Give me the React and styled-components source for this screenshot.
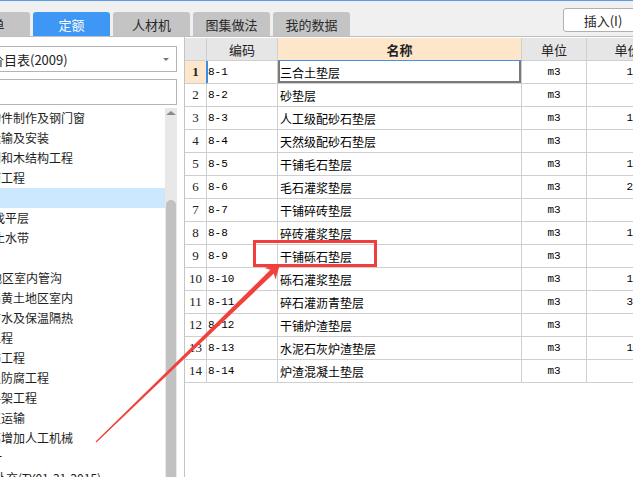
import React from "react";
import styled, { createGlobalStyle } from "styled-components";

const GlobalStyle = createGlobalStyle`
  html, body {
    margin: 0;
    padding: 0;
    background: #fff;
    overflow: hidden;
  }
  body {
    font-family: "Noto Sans CJK SC", "Noto Sans", sans-serif;
  }
`;

const tabs = [
  { label: "清单" },
  { label: "定额", active: true },
  { label: "人材机" },
  { label: "图集做法" },
  { label: "我的数据" },
];

// text includes the char cut at the left edge, shift = where the text starts
const chapters = [
  { text: "构件制作及钢门窗", shift: -11 },
  { text: "运输及安装", shift: -11 },
  { text: "门和木结构工程", shift: -11 },
  { text: "面工程", shift: -11 },
  { text: "垫层", shift: -40, selected: true },
  { text: "找平层", shift: -7 },
  { text: "止水带", shift: -7 },
  { text: "其他", shift: -40 },
  { text: "地区室内管沟", shift: -10 },
  { text: "陷黄土地区室内", shift: -11 },
  { text: "防水及保温隔热", shift: -11 },
  { text: "工程", shift: -11 },
  { text: "饰工程", shift: -11 },
  { text: "及防腐工程", shift: -11 },
  { text: "手架工程", shift: -11 },
  { text: "直运输", shift: -11 },
  { text: "高增加人工机械", shift: -11 },
  { text: "计", shift: -10 },
  { text: "补充(TY01-31-2015)", shift: -6 },
];

const rows = [
  ["8-1", "三合土垫层", "136.59"],
  ["8-2", "砂垫层", "81.30"],
  ["8-3", "人工级配砂石垫层", "152.47"],
  ["8-4", "天然级配砂石垫层", "94.88"],
  ["8-5", "干铺毛石垫层", "118.62"],
  ["8-6", "毛石灌浆垫层", "209.45"],
  ["8-7", "干铺碎砖垫层", "96.13"],
  ["8-8", "碎砖灌浆垫层", "143.70"],
  ["8-9", "干铺砾石垫层", "88.26"],
  ["8-10", "砾石灌浆垫层", "157.34"],
  ["8-11", "碎石灌沥青垫层", "312.05"],
  ["8-12", "干铺炉渣垫层", "75.91"],
  ["8-13", "水泥石灰炉渣垫层", "164.28"],
  ["8-14", "炉渣混凝土垫层", "92.60"],
];

const App = () => {
  return (
    <>
      <GlobalStyle />
      <Frame>
        <TopLine />
        <TabBar>
          <TabStrip>
            {tabs.map((t) => (
              <Tab key={t.label} $active={t.active}>
                {t.label}
              </Tab>
            ))}
          </TabStrip>
          <InsertButton>插入(I)</InsertButton>
        </TabBar>
        <Body>
          <LeftPanel>
            <Select>
              <span>建筑价目表(2009)</span>
              <SelectArrow />
            </Select>
            <SearchBox />
            <ListWrap>
              <List>
                {chapters.map((c) => (
                  <ListItem key={c.text} $shift={c.shift} $selected={c.selected}>
                    {c.text}
                  </ListItem>
                ))}
              </List>
              <ScrollTrack>
                <ScrollUp />
                <ScrollThumb />
              </ScrollTrack>
            </ListWrap>
          </LeftPanel>
          <TableArea>
            <GridRow $head>
              <HeadCell />
              <HeadCell>编码</HeadCell>
              <HeadCell $accent>名称</HeadCell>
              <HeadCell>单位</HeadCell>
              <HeadCell>单价</HeadCell>
            </GridRow>
            {rows.map(([code, name, price], i) => (
              <GridRow key={code}>
                <NumCell $current={i === 0}>{i + 1}</NumCell>
                <Cell $mono $marker={i === 0}>
                  {code}
                </Cell>
                <Cell $selected={i === 0}>{name}</Cell>
                <Cell $mono $align="center">
                  m3
                </Cell>
                <Cell $mono $align="right">
                  {price}
                </Cell>
              </GridRow>
            ))}
          </TableArea>
        </Body>
        <Overlay width="633" height="477" viewBox="0 0 633 477">
          <rect x="254.5" y="241.5" width="121" height="24" fill="none" stroke="#f23d3d" strokeWidth="3" />
          <polygon
            fill="#f0413d"
            points="95.6,441.6 270.35,269.85 264.38,267.98 280,264 275.5,279.48 273.83,273.45 96.4,442.4"
          />
        </Overlay>
      </Frame>
    </>
  );
};
export default App;

const Frame = styled.div`
  position: relative;
  width: 633px;
  height: 477px;
  display: flex;
  flex-direction: column;
  overflow: hidden;
  background: #fff;
`;
const TopLine = styled.div`
  height: 1px;
  background: #5b9ee8;
  flex-shrink: 0;
`;
const TabBar = styled.div`
  height: 35px;
  flex-shrink: 0;
  display: flex;
  align-items: flex-start;
  padding-top: 7px;
  box-sizing: border-box;
  background: #f0f0f0;
  border-bottom: 1px solid #bdbdbd;
  height: 36px;
`;
const TabStrip = styled.div`
  display: flex;
  gap: 3px;
  margin-left: -47px;
  margin-top: 4px;
`;
const Tab = styled.div`
  width: 77px;
  height: 24px;
  display: flex;
  align-items: center;
  justify-content: center;
  border-radius: 3px 3px 0 0;
  font-size: 13px;
  background: ${(p) => (p.$active ? "#3f97f5" : "#c4c4c4")};
  color: ${(p) => (p.$active ? "#fff" : "#2a2a2a")};
`;
const InsertButton = styled.div`
  margin-left: auto;
  margin-right: -10px;
  width: 80px;
  height: 24px;
  box-sizing: border-box;
  display: flex;
  align-items: center;
  justify-content: center;
  background: #fff;
  border: 1px solid #b0b0b0;
  border-radius: 3px;
  font-size: 13px;
  color: #222;
`;
const Body = styled.div`
  flex: 1;
  display: flex;
  min-height: 0;
`;
const LeftPanel = styled.div`
  width: 177px;
  margin-right: 7px;
  flex-shrink: 0;
  display: flex;
  flex-direction: column;
`;
const Select = styled.div`
  margin: 9px 0 0 -20px;
  height: 26px;
  box-sizing: border-box;
  border: 1px solid #b4b4b4;
  display: flex;
  align-items: center;
  padding: 0 7px 0 10px;
  font-size: 13px;
  color: #222;
  white-space: nowrap;
  span {
    flex: 1;
    margin-left: -26px;
  }
`;
const SelectArrow = styled.div`
  width: 0;
  height: 0;
  border-left: 3px solid transparent;
  border-right: 3px solid transparent;
  border-top: 3px solid #777;
`;
const SearchBox = styled.div`
  margin: 7px 0 0 -20px;
  height: 26px;
  box-sizing: border-box;
  border: 1px solid #b4b4b4;
`;
const ListWrap = styled.div`
  flex: 1;
  margin-top: 3px;
  display: flex;
  min-height: 0;
`;
const List = styled.div`
  flex: 1;
  overflow: hidden;
`;
const ListItem = styled.div`
  height: 20px;
  line-height: 20px;
  font-size: 12px;
  color: #1e1e1e;
  white-space: nowrap;
  overflow: hidden;
  text-indent: ${(p) => p.$shift}px;
  background: ${(p) => (p.$selected ? "#cce8ff" : "transparent")};
`;
const ScrollTrack = styled.div`
  width: 12px;
  background: #e8e8e8;
  display: flex;
  flex-direction: column;
  align-items: center;
`;
const ScrollUp = styled.div`
  margin-top: 3px;
  width: 0;
  height: 0;
  border-left: 5px solid transparent;
  border-right: 5px solid transparent;
  border-bottom: 4px solid #8a8a8a;
`;
const ScrollThumb = styled.div`
  margin-top: 85px;
  flex: 1;
  width: 10px;
  background: #c1c1c1;
  border-radius: 5px 5px 0 0;
`;
const TableArea = styled.div`
  flex: 1;
  border-left: 1px solid #c4c4c4;
  padding-top: 1px;
  overflow: hidden;
`;
const GridRow = styled.div`
  display: grid;
  grid-template-columns: 22px 71px 244px 65px 82px;
  height: 23px;
`;
const HeadCell = styled.div`
  box-sizing: border-box;
  display: flex;
  align-items: center;
  justify-content: center;
  font-size: 13px;
  color: #222;
  font-weight: ${(p) => (p.$accent ? 700 : 400)};
  background: ${(p) => (p.$accent ? "#fde6c9" : "#e6e6e6")};
  border-right: 1px solid #cfcfcf;
  border-bottom: 1px solid ${(p) => (p.$accent ? "#4a90e2" : "#cfcfcf")};
`;
const NumCell = styled.div`
  box-sizing: border-box;
  display: flex;
  align-items: center;
  justify-content: center;
  font-family: "Liberation Serif", serif;
  font-size: 13px;
  color: #222;
  font-weight: ${(p) => (p.$current ? 700 : 400)};
  background: ${(p) => (p.$current ? "#fde6c9" : "#fff")};
  border-right: 1px solid ${(p) => (p.$current ? "#3a8ee6" : "#cfcfcf")};
  border-bottom: 1px solid #cfcfcf;
`;
const Cell = styled.div`
  box-sizing: border-box;
  display: flex;
  align-items: center;
  justify-content: ${(p) =>
    p.$align === "center" ? "center" : p.$align === "right" ? "flex-end" : "flex-start"};
  padding: 0 2px;
  white-space: nowrap;
  overflow: hidden;
  font-family: ${(p) =>
    p.$mono ? '"Liberation Mono", monospace' : '"Noto Sans CJK SC", sans-serif'};
  font-size: ${(p) => (p.$mono ? "11px" : "12px")};
  color: #000;
  border-right: 1px solid #cfcfcf;
  border-bottom: 1px solid #cfcfcf;
  padding-left: ${(p) => (p.$mono && !p.$align ? "1px" : "2px")};
  box-shadow: ${(p) =>
    p.$selected
      ? "inset 2px -2px 0 #7a7a7a, inset -2px 0 0 #7a7a7a"
      : p.$marker
      ? "inset 1px 0 0 #3a8ee6"
      : "none"};
`;
const Overlay = styled.svg`
  position: absolute;
  left: 0;
  top: 0;
  pointer-events: none;
`;
